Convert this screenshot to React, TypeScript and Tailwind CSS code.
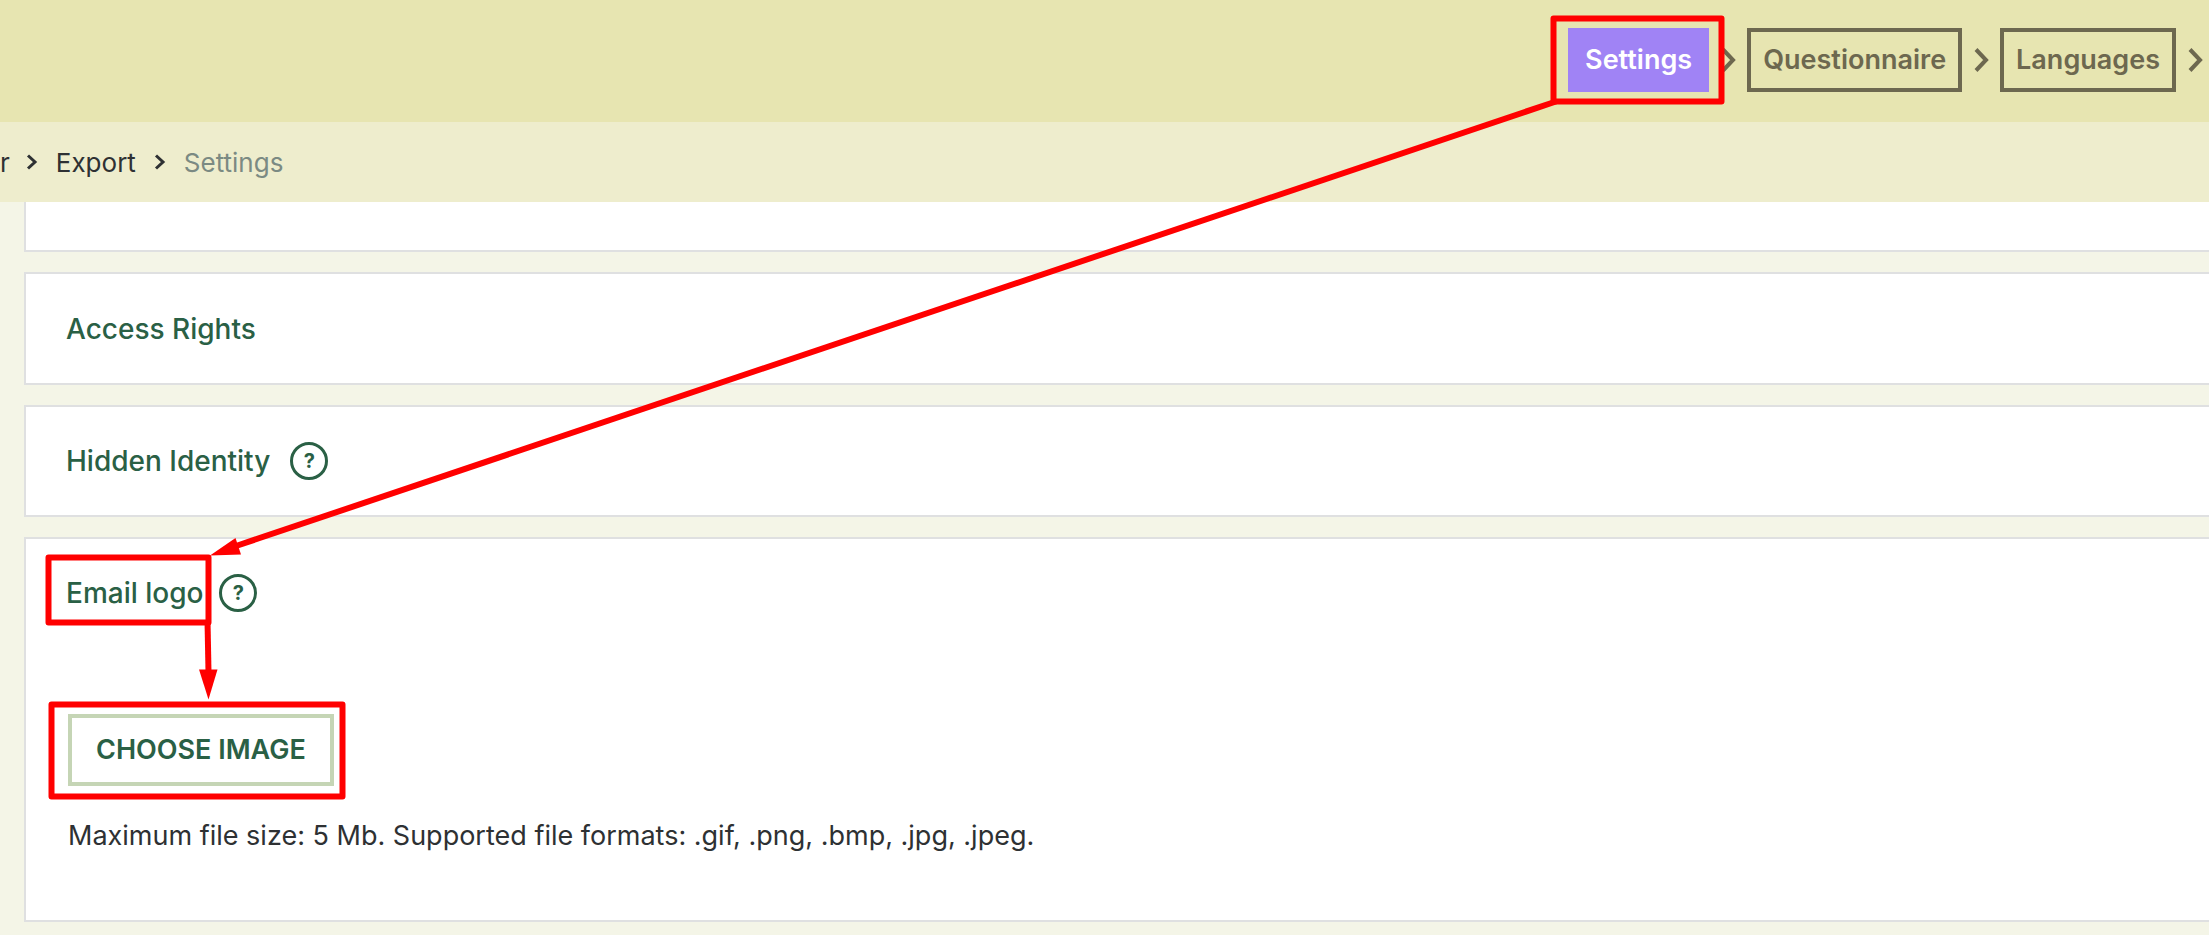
import { useRef } from 'react';

interface Step {
  label: string;
  active?: boolean;
}

const steps: Step[] = [
  { label: 'Settings', active: true },
  { label: 'Questionnaire' },
  { label: 'Languages' },
];

function StepArrow() {
  return (
    <svg className="h-6 w-4 shrink-0 text-[#6d684f]" viewBox="0 0 16 24" fill="none" stroke="currentColor" strokeWidth="4" aria-hidden="true">
      <path d="M3 1.500 13 12 3 22.500" />
    </svg>
  );
}

function CrumbArrow() {
  return (
    <svg className="h-4 w-3 shrink-0 text-[#2e3133]" viewBox="0 0 12 16" fill="none" stroke="currentColor" strokeWidth="3" aria-hidden="true">
      <path d="M2 1.500 9 8 2 14.500" />
    </svg>
  );
}

function HelpButton({ label }: { label: string }) {
  return (
    <button
      type="button"
      aria-label={label}
      className="flex size-[38px] shrink-0 items-center justify-center rounded-full border-3 border-[#2a6045] text-xl leading-none font-bold text-[#2a6045]"
    >
      ?
    </button>
  );
}

export default function App() {
  const fileInput = useRef<HTMLInputElement>(null);

  return (
    <div className="relative min-h-screen overflow-hidden bg-[#f4f5e7] font-['Inter',sans-serif] text-[#2e3133]">
      {/* Steps */}
      <header className="flex h-[122px] items-start justify-end gap-[11px] bg-[#e7e5b1] pt-7 pr-1.5">
        {steps.map((step) => (
          <div key={step.label} className="flex items-center gap-[11px]">
            <button
              type="button"
              className={`h-16 text-[27px] font-semibold ${
                step.active ? 'bg-[#a083f5] px-[17px] text-white' : 'border-4 border-[#6d684f] px-3 text-[#6d684f]'
              }`}
            >
              {step.label}
            </button>
            <StepArrow />
          </div>
        ))}
      </header>

      {/* Breadcrumbs */}
      <nav className="flex h-20 items-center bg-[#eeedcd] text-[26px]" aria-label="Breadcrumbs">
        <a href="#" className="mr-4">r</a>
        <CrumbArrow />
        <a href="#" className="mx-[18px]">Export</a>
        <CrumbArrow />
        <span className="ml-[18px] text-[#7b8a83]">Settings</span>
      </nav>

      {/* Setting panels */}
      <main className="flex flex-col gap-5 pl-6">
        <section className="h-[50px] border-b-2 border-l-2 border-[#dfe0e1] bg-white" />

        <section className="flex h-[113px] items-center border-y-2 border-l-2 border-[#dfe0e1] bg-white px-10">
          <h2 className="text-[28px] font-medium text-[#2a6045]">Access Rights</h2>
        </section>

        <section className="flex h-28 items-center gap-5 border-y-2 border-l-2 border-[#dfe0e1] bg-white px-10">
          <h2 className="text-[28px] font-medium text-[#2a6045]">Hidden Identity</h2>
          <HelpButton label="About hidden identity" />
        </section>

        <section className="border-y-2 border-l-2 border-[#dfe0e1] bg-white px-10 pb-16">
          <div className="flex h-[108px] items-center gap-4">
            <h2 className="text-[28px] font-medium text-[#2a6045]">Email logo</h2>
            <HelpButton label="About email logo" />
          </div>
          <div className="mt-[67px] ml-0.5 text-[27px]">
            <button
              type="button"
              onClick={() => fileInput.current?.click()}
              className="block h-[72px] border-4 border-[#c5d5b5] px-6 font-semibold text-[#2a6045]"
            >
              CHOOSE IMAGE
            </button>
            <input ref={fileInput} type="file" accept=".gif,.png,.bmp,.jpg,.jpeg" aria-label="Email logo image" className="hidden" />
            <p className="mt-[30px] leading-10">Maximum file size: 5 Mb. Supported file formats: .gif, .png, .bmp, .jpg, .jpeg.</p>
          </div>
        </section>
      </main>

      {/* Walkthrough marks */}
      <svg className="pointer-events-none absolute top-0 right-0 h-[935px] w-[2209px]" viewBox="0 0 2209 935" fill="none" stroke="#ff0000" strokeWidth="6" strokeLinejoin="round" aria-hidden="true">
        <rect x="1553.5" y="18.5" width="168" height="83" />
        <rect x="48.5" y="557.5" width="160" height="65" />
        <rect x="51.5" y="704.5" width="291" height="92" />
        <path d="M1556 101.500 236 546" />
        <path d="M207.500 620 208.500 672" />
        <path d="M210 555.500 235.500 538 241 554.500Z" fill="#ff0000" stroke="none" />
        <path d="M199 669.500H217.500L208.500 699.500Z" fill="#ff0000" stroke="none" />
      </svg>
    </div>
  );
}
